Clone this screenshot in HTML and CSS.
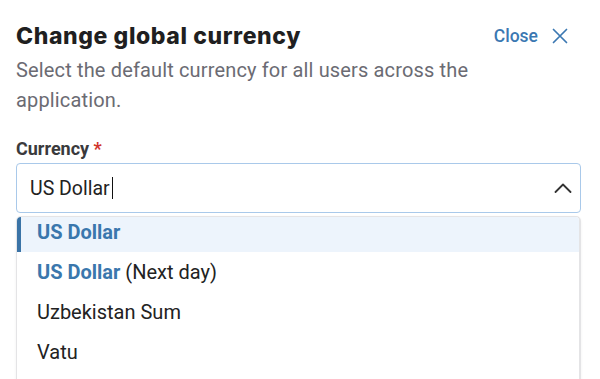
FILE: index.html
```html
<!DOCTYPE html>
<html lang="en">
  <head>
    <meta charset="UTF-8" />
    <meta name="viewport" content="width=device-width, initial-scale=1.0" />
    <title>Change global currency</title>
    <link rel="stylesheet" href="styles.css">
  </head>
  <body>
    <div class="panel">
      <div class="panel-header">
        <h1>Change global currency</h1>
        <button class="close-btn">
          Close
          <svg width="16" height="16" viewBox="0 0 16 16" fill="none" stroke="currentColor" stroke-width="1.7" stroke-linecap="round">
            <path d="M1.5 1.5 L14.5 14.5 M14.5 1.5 L1.5 14.5" />
          </svg>
        </button>
      </div>
      <p class="subtitle">Select the default currency for all users across the application.</p>

      <label class="field-label" for="currencyInput">Currency <span class="required">*</span></label>
      <div class="combo">
        <div class="combo-input">
          <span class="combo-value">US Dollar</span><span class="caret"></span>
          <svg class="chevron" width="18" height="10" viewBox="0 0 18 10" fill="none" stroke="#333" stroke-width="1.8" stroke-linecap="round" stroke-linejoin="round">
            <path d="M1.5 9 L9 1.5 L16.5 9" />
          </svg>
        </div>
        <div class="combo-list">
          <ul>
            <li class="active"><b>US Dollar</b></li>
            <li><b>US Dollar</b> (Next day)</li>
            <li>Uzbekistan Sum</li>
            <li>Vatu</li>
          </ul>
        </div>
      </div>
    </div>
  </body>
</html>
```

FILE: styles.css
```css
body {
  margin: 0;
  background: #fff;
  font-family: Roboto, "Liberation Sans", sans-serif;
  color: #222;
  overflow: hidden;
}
.panel {
  padding: 22px 19px 0 16px;
}
.panel-header {
  display: flex;
  justify-content: space-between;
  align-items: center;
}
h1 {
  margin: 0;
  font-family: Inter, "Liberation Sans", sans-serif;
  font-size: 23px;
  font-weight: 800;
  color: #1f1f21;
  letter-spacing: 0.6px;
  line-height: 28px;
}
.close-btn {
  display: flex;
  align-items: center;
  gap: 14px;
  border: none;
  background: none;
  padding: 0;
  margin-right: 13px;
  font-family: Roboto, sans-serif;
  font-size: 17.5px;
  font-weight: 500;
  color: #3b78b2;
  cursor: pointer;
}
.subtitle {
  margin: 5px 0 0;
  font-size: 20px;
  letter-spacing: 0.15px;
  line-height: 30px;
  color: #6b6b73;
  max-width: 470px;
}
.field-label {
  display: block;
  margin-top: 24px;
  font-size: 18px;
  font-weight: 700;
  color: #3a3a3c;
  line-height: 20px;
}
.required {
  color: #d0342c;
}
.combo {
  margin-top: 4px;
  width: 565px;
}
.combo-input {
  box-sizing: border-box;
  height: 50px;
  border: 1px solid #a9c9ea;
  border-radius: 4px;
  display: flex;
  align-items: center;
  padding: 0 8px 0 13px;
  font-size: 19.5px;
  color: #222;
}
.caret {
  display: inline-block;
  width: 1px;
  height: 22px;
  background: #111;
  margin-left: 2px;
}
.chevron {
  margin-left: auto;
}
.combo-list {
  margin-top: 3px;
  border: 1px solid #e4e4e6;
  border-right-width: 2px;
  border-radius: 5px 5px 0 0;
  box-shadow: 0 1px 3px rgba(0, 0, 0, 0.06);
  height: 170px;
  overflow: hidden;
  padding-top: 2px;
}
.combo-list ul {
  list-style: none;
  margin: -7px 0 0;
  padding: 0;
}
.combo-list li {
  height: 40px;
  line-height: 40px;
  padding-left: 20px;
  font-size: 20px;
  color: #222;
}
.combo-list li b {
  color: #3a77ad;
  font-weight: 700;
}
.combo-list li.active {
  background: #edf4fc;
  box-shadow: inset 4px 0 0 #3a73a6;
}
```
